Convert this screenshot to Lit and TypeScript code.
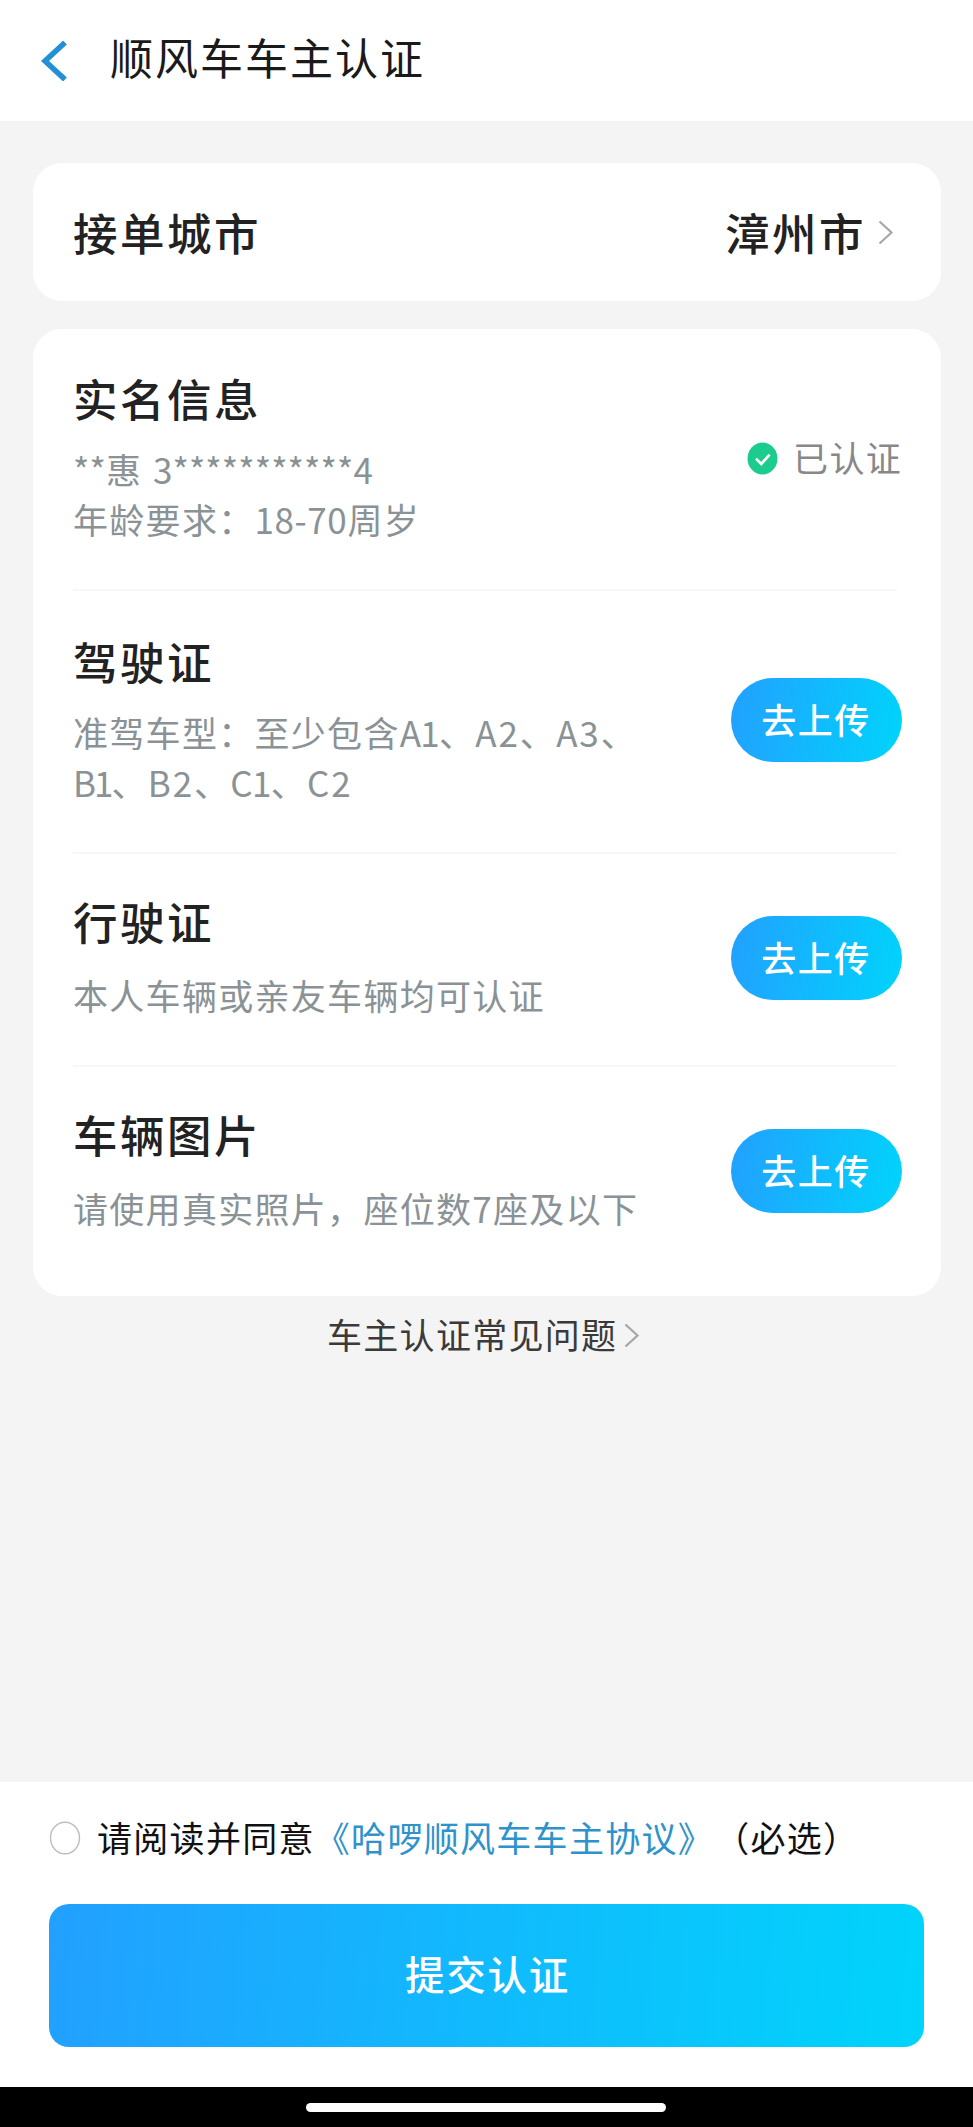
import { LitElement, html, css } from 'lit';
import { customElement, property } from 'lit/decorators.js';

interface Requirement {
  kind: string;
  title: string;
  lines: unknown[];
  verified?: boolean;
}

const requirements: Requirement[] = [
  {
    kind: 'identity',
    title: '实名信息',
    lines: [
      html`<span class="mask">**</span>惠<span class="id"> 3<span class="mask">***********</span>4</span>`,
      html`年龄要求：<span class="num">18-70</span>周岁`,
    ],
    verified: true,
  },
  {
    kind: 'licence',
    title: '驾驶证',
    lines: [
      html`准驾车型：至少包含<span class="snug">A1</span>、<span class="wide">A2</span>、<span class="wide">A3</span>、`,
      html`<span class="tight">B1</span>、<span class="wide">B2</span>、<span class="snug">C1</span>、<span class="wide">C2</span>`,
    ],
  },
  { kind: 'permit', title: '行驶证', lines: ['本人车辆或亲友车辆均可认证'] },
  { kind: 'photo', title: '车辆图片', lines: ['请使用真实照片，座位数7座及以下'] },
];

@customElement('chevron-icon')
class ChevronIcon extends LitElement {
  static styles = css`
    :host { display: block; width: 16px; height: 26px; }
    svg { display: block; }
  `;
  render() {
    return html`<svg width="16" height="26" viewBox="0 0 16 26" fill="none" stroke="#a6a6a6" stroke-width="2.2">
      <path d="M1.5 2.5 L13.5 13.5 L1.5 24.5" />
    </svg>`;
  }
}

@customElement('requirement-row')
class RequirementRow extends LitElement {
  @property({ attribute: false }) item!: Requirement;

  static styles = css`
    :host { display: block; }
    .row {
      box-sizing: border-box;
      display: flex;
      justify-content: space-between;
      align-items: flex-start;
      border-bottom: 2px solid #f7f7f7;
    }
    .identity { height: 262px; }
    .licence { height: 263px; }
    .permit { height: 213px; }
    .photo { height: 229px; border-bottom: none; }
    .title {
      margin: 0;
      font-size: 44.5px;
      line-height: 60px;
      letter-spacing: 2.5px;
      font-weight: 500;
      color: #222;
    }
    .lines {
      font-size: 35px;
      line-height: 50px;
      letter-spacing: 1.3px;
      color: #8a9296;
      white-space: nowrap;
    }
    .identity .info { padding-top: 39px; }
    .identity .lines { margin-top: 16px; }
    .licence .info { padding-top: 40px; }
    .licence .lines { margin-top: 16px; }
    .permit .info { padding-top: 37px; }
    .permit .lines { margin-top: 19px; }
    .photo .info { padding-top: 37px; }
    .photo .lines { margin-top: 19px; }
    .mask { letter-spacing: 0.1px; }
    .id { letter-spacing: 0; word-spacing: 3px; }
    .num { letter-spacing: 0.6px; }
    .wide { letter-spacing: 1.9px; }
    .snug { letter-spacing: -0.7px; }
    .tight { letter-spacing: -2px; }
    .upload {
      box-sizing: border-box;
      width: 171px;
      height: 84px;
      margin: 0 -5px 0 0;
      padding: 0 1px 2px 0;
      border: 0;
      border-radius: 42px;
      background: linear-gradient(100deg, #22a0ff, #00d4fb);
      color: #fff;
      font: 500 35px/82px "Noto Sans CJK SC", sans-serif;
      letter-spacing: 1.5px;
    }
    .licence .upload { margin-top: 87px; }
    .permit .upload { margin-top: 62px; }
    .photo .upload { margin-top: 62px; }
    .status {
      display: flex;
      align-items: center;
      gap: 15px;
      margin-top: 103px;
      margin-right: -5px;
      font-size: 35px;
      line-height: 50px;
      letter-spacing: 1.3px;
      color: #888;
    }
    .status svg { display: block; margin-top: 3px; }
  `;

  render() {
    const { kind, title, lines, verified } = this.item;
    return html`<section class="row ${kind}">
      <div class="info">
        <h2 class="title">${title}</h2>
        <div class="lines">${lines.map((l) => html`<div>${l}</div>`)}</div>
      </div>
      ${verified
        ? html`<div class="status">
            <svg width="31" height="33" viewBox="0 0 31 33">
              <ellipse cx="15.5" cy="16.5" rx="15" ry="16" fill="#1ccb8e" />
              <path d="M9 16.6 L14.2 22 L22.6 12.6" fill="none" stroke="#fff" stroke-width="2.7" />
            </svg>
            <span>已认证</span>
          </div>`
        : html`<button class="upload">去上传</button>`}
    </section>`;
  }
}

@customElement('app-root')
class AppRoot extends LitElement {
  static styles = css`
    :host {
      display: flex;
      flex-direction: column;
      width: 973px;
      height: 2127px;
      background: #f4f4f4;
      font-family: "Noto Sans CJK SC", sans-serif;
      overflow: hidden;
    }
    .header {
      box-sizing: border-box;
      flex: none;
      display: flex;
      align-items: center;
      height: 121px;
      padding: 0 0 4px 40px;
      background: #fff;
    }
    .back { flex: none; display: block; margin-top: 5px; }
    .heading {
      margin: 0 0 5px 42px;
      font-size: 43px;
      line-height: 60px;
      letter-spacing: 2px;
      font-weight: 400;
      color: #1a1a1a;
    }
    .main {
      flex: 1;
      display: flex;
      flex-direction: column;
      padding: 42px 32px 0 33px;
    }
    .card { background: #fff; border-radius: 29px; }
    .city {
      box-sizing: border-box;
      display: flex;
      align-items: center;
      height: 138px;
      padding: 0 47px 0 40px;
      font-size: 44.5px;
      line-height: 60px;
      letter-spacing: 2.5px;
      font-weight: 500;
      color: #222;
    }
    .city .value { margin-left: auto; margin-right: 12px; }
    .list { margin-top: 28px; padding: 0 44px 0 40px; }
    .faq {
      display: flex;
      align-items: center;
      gap: 7px;
      margin: 13px 0 0 294px;
      font-size: 35px;
      line-height: 50px;
      letter-spacing: 1.3px;
      color: #3a3a3a;
    }
    .faq chevron-icon { margin-top: 2px; }
    .footer {
      box-sizing: border-box;
      flex: none;
      height: 305px;
      padding: 30px 49px 0;
      background: #fff;
    }
    .agree {
      display: flex;
      align-items: center;
      height: 50px;
      font-size: 35px;
      line-height: 50px;
      letter-spacing: 1.3px;
      color: #111;
      white-space: nowrap;
    }
    .radio { display: block; margin: 2px 16px 0 0; }
    .link { color: #2e93cc; }
    .submit {
      display: block;
      width: 875px;
      height: 143px;
      margin-top: 42px;
      padding: 0 0 5px 2px;
      border: 0;
      border-radius: 20px;
      background: linear-gradient(95deg, #22a0ff, #00d4fb);
      color: #fff;
      font: 500 39.5px/60px "Noto Sans CJK SC", sans-serif;
      letter-spacing: 1.8px;
    }
    .system {
      flex: none;
      display: flex;
      justify-content: center;
      height: 40px;
      background: #000;
    }
    .handle {
      width: 360px;
      height: 9px;
      margin: 16px 1px 0 0;
      border-radius: 5px;
      background: #fff;
    }
  `;

  render() {
    return html`
      <header class="header">
        <svg class="back" width="28" height="40" viewBox="0 0 28 40">
          <path d="M25 1.5 L5 20 L25 38.5" fill="none" stroke="#2490d4" stroke-width="5.5" />
        </svg>
        <h1 class="heading">顺风车车主认证</h1>
      </header>
      <main class="main">
        <div class="card city">
          <span>接单城市</span>
          <span class="value">漳州市</span>
          <chevron-icon></chevron-icon>
        </div>
        <div class="card list">
          ${requirements.map((r) => html`<requirement-row .item=${r}></requirement-row>`)}
        </div>
        <div class="faq"><span>车主认证常见问题</span><chevron-icon></chevron-icon></div>
      </main>
      <footer class="footer">
        <div class="agree">
          <svg class="radio" width="32" height="34" viewBox="0 0 32 34">
            <ellipse cx="16" cy="17" rx="14.5" ry="15.8" fill="none" stroke="#bdbdbd" stroke-width="1.4" />
          </svg>
          <span>请阅读并同意</span><span class="link">《哈啰顺风车车主协议》</span><span>（必选）</span>
        </div>
        <button class="submit">提交认证</button>
      </footer>
      <div class="system"><div class="handle"></div></div>
    `;
  }
}
